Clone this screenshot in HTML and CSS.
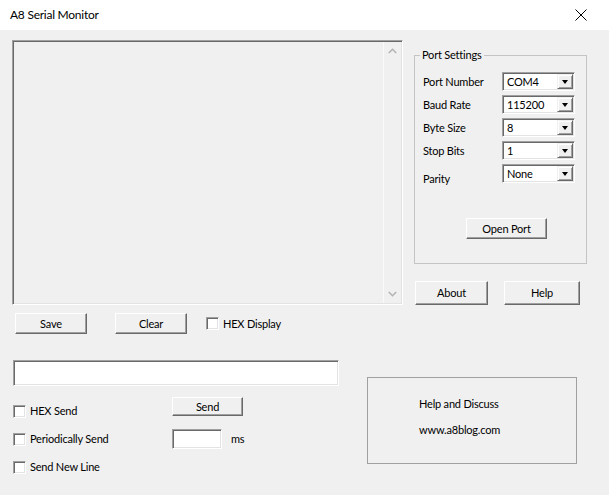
FILE: index.html
```html
<!DOCTYPE html>
<html>
<head>
<meta charset="utf-8">
<link rel="stylesheet" href="styles.css">
</head>
<body>
<div class="window">
  <div class="titlebar">
    <span class="title">A8 Serial Monitor</span>
    <span class="close"><svg width="12" height="12" viewBox="0 0 12 12"><path d="M0.5 0.5 L11.5 11.5 M11.5 0.5 L0.5 11.5" stroke="#000" stroke-width="1" fill="none"/></svg></span>
  </div>
  <div class="client">
    <div class="top">
      <div class="output">
        <div class="vscroll">
          <svg class="arrow" width="9" height="6" viewBox="0 0 9 6"><path d="M0.8 5 L4.5 1.3 L8.2 5" stroke="#b4b4b4" stroke-width="1.6" fill="none"/></svg>
          <svg class="arrow" width="9" height="6" viewBox="0 0 9 6"><path d="M0.8 1 L4.5 4.7 L8.2 1" stroke="#b4b4b4" stroke-width="1.6" fill="none"/></svg>
        </div>
      </div>
      <div class="side">
        <fieldset class="group">
          <legend>Port Settings</legend>
          <div class="field"><span class="lbl">Port Number</span><div class="combo"><span class="val">COM4</span><span class="drop"></span></div></div>
          <div class="field"><span class="lbl">Baud Rate</span><div class="combo"><span class="val">115200</span><span class="drop"></span></div></div>
          <div class="field"><span class="lbl">Byte Size</span><div class="combo"><span class="val">8</span><span class="drop"></span></div></div>
          <div class="field"><span class="lbl">Stop Bits</span><div class="combo"><span class="val">1</span><span class="drop"></span></div></div>
          <div class="field"><span class="lbl lbl-low">Parity</span><div class="combo"><span class="val">None</span><span class="drop"></span></div></div>
          <div class="open-row"><span class="btn btn-open">Open Port</span></div>
        </fieldset>
        <div class="side-buttons">
          <span class="btn btn-about">About</span>
          <span class="btn btn-help">Help</span>
        </div>
      </div>
    </div>
    <div class="toolbar">
      <span class="btn btn-save">Save</span>
      <span class="btn btn-clear">Clear</span>
      <span class="check"><span class="box"></span>HEX Display</span>
    </div>
    <div class="bottom">
      <div class="sendcol">
        <div class="sendbox"></div>
        <div class="sendgrid">
          <span class="check"><span class="box"></span>HEX Send</span>
          <span class="btn btn-send">Send</span>
          <span class="check"><span class="box"></span>Periodically Send</span>
          <span class="period"><span class="msbox"></span><span class="ms">ms</span></span>
          <span class="check"><span class="box"></span>Send New Line</span>
        </div>
      </div>
      <div class="infobox">
        <div class="info-line">Help and Discuss</div>
        <div class="info-line info-link">www.a8blog.com</div>
      </div>
    </div>
  </div>
</div>
</body>
</html>
```

FILE: styles.css
```css
html, body {
  margin: 0;
  padding: 0;
  background: #f0f0f0;
}
body {
  font-family: "Lato", "Noto Sans", sans-serif;
  font-size: 11px;
  letter-spacing: -0.2px;
  line-height: 16px;
  color: #000;
}
.window {
  width: 609px;
  height: 495px;
  background: #f0f0f0;
  overflow: hidden;
}
.titlebar {
  height: 30px;
  background: #fff;
  display: flex;
  align-items: center;
  justify-content: space-between;
  padding: 0 22px 0 10px;
  box-sizing: border-box;
}
.title {
  font-size: 12px;
  letter-spacing: -0.25px;
}
.close { display: flex; }
.client {
  padding: 10px 0 0 12px;
}
.top {
  display: flex;
  height: 265px;
}
.output {
  width: 391px;
  height: 265px;
  box-sizing: border-box;
  border: 1px solid;
  border-color: #a0a0a0 #fff #fff #a0a0a0;
  box-shadow: inset 1px 1px #696969, inset -1px -1px #e3e3e3;
  display: flex;
  justify-content: flex-end;
  padding: 1px;
}
.vscroll {
  width: 17px;
  border-left: 1px solid #fafafa;
  display: flex;
  flex-direction: column;
  justify-content: space-between;
  align-items: center;
  padding: 6px 0 6px;
}
.side {
  margin-left: 11px;
  width: 173px;
  display: flex;
  flex-direction: column;
}
.group {
  margin: 7px 0 0 0;
  height: 218px;
  box-sizing: border-box;
  border: 1px solid #c4c4c4;
  padding: 9px 11px 0 8px;
  min-width: 0;
}
.group legend {
  padding: 0 2px;
  margin-left: -3px;
  line-height: 16px;
}
.field {
  display: flex;
  align-items: center;
  height: 19px;
  margin-bottom: 4px;
}
.lbl {
  width: 79px;
  flex: none;
}
.lbl-low { padding-top: 10px; }
.combo {
  width: 73px;
  height: 19px;
  box-sizing: border-box;
  border: 1px solid;
  border-color: #a0a0a0 #fff #fff #a0a0a0;
  box-shadow: inset 1px 1px #696969, inset -1px -1px #e3e3e3;
  background: #fff;
  display: flex;
  align-items: stretch;
  padding: 1px 1px 1px 1px;
}
.val {
  flex: 1;
  padding-left: 3px;
  line-height: 15px;
}
.drop {
  width: 16px;
  box-sizing: border-box;
  background: #f0f0f0;
  border: 1px solid;
  border-color: #f0f0f0 #696969 #696969 #f0f0f0;
  box-shadow: inset 1px 1px #fff, inset -1px -1px #a0a0a0;
  display: flex;
  align-items: center;
  justify-content: center;
}
.drop::after {
  content: "";
  border-left: 3.5px solid transparent;
  border-right: 3.5px solid transparent;
  border-top: 4px solid #000;
  margin-top: 1px;
}
.btn {
  display: flex;
  align-items: center;
  justify-content: center;
  box-sizing: border-box;
  background: #f0f0f0;
  border: 1px solid;
  border-color: #fff #696969 #696969 #fff;
  box-shadow: inset -1px -1px #a0a0a0;
}
.open-row {
  margin-top: 35px;
  padding-left: 43px;
  display: flex;
}
.btn-open { width: 81px; height: 21px; }
.side-buttons {
  display: flex;
  margin-top: 17px;
  padding-left: 1px;
}
.btn-about { width: 73px; height: 24px; }
.btn-help { width: 76px; height: 24px; margin-left: 16px; }
.toolbar {
  display: flex;
  align-items: center;
  margin-top: 8px;
  padding-left: 3px;
  height: 21px;
}
.btn-save { width: 72px; height: 21px; }
.btn-clear { width: 72px; height: 21px; margin-left: 28px; }
.toolbar .check { margin-left: 19px; }
.check {
  display: flex;
  align-items: center;
}
.box {
  width: 13px;
  height: 13px;
  box-sizing: border-box;
  background: #fff;
  border: 1px solid;
  border-color: #a0a0a0 #fff #fff #a0a0a0;
  box-shadow: inset 1px 1px #696969, inset -1px -1px #e3e3e3;
  margin-right: 4px;
  flex: none;
}
.bottom {
  display: flex;
  margin-top: 26px;
}
.sendcol {
  margin-left: 1px;
  display: flex;
  flex-direction: column;
}
.sendbox {
  width: 326px;
  height: 26px;
  box-sizing: border-box;
  background: #fff;
  border: 1px solid;
  border-color: #a0a0a0 #fff #fff #a0a0a0;
  box-shadow: inset 1px 1px #696969, inset -1px -1px #e3e3e3;
}
.sendgrid {
  display: grid;
  grid-template-columns: 159px auto;
  grid-template-rows: 28px 28px 28px;
  margin-top: 11px;
}
.btn-send { width: 71px; height: 19px; align-self: start; justify-self: start; }
.period {
  display: flex;
  align-items: center;
}
.msbox {
  width: 50px;
  height: 20px;
  box-sizing: border-box;
  background: #fff;
  border: 1px solid;
  border-color: #a0a0a0 #fff #fff #a0a0a0;
  box-shadow: inset 1px 1px #696969, inset -1px -1px #e3e3e3;
}
.ms { margin-left: 9px; }
.infobox {
  margin: 17px 0 0 28px;
  width: 210px;
  height: 87px;
  box-sizing: border-box;
  border: 1px solid #a0a0a0;
  padding: 18px 0 0 51px;
}
.info-line { line-height: 16px; }
.info-link { margin-top: 10px; }
```
